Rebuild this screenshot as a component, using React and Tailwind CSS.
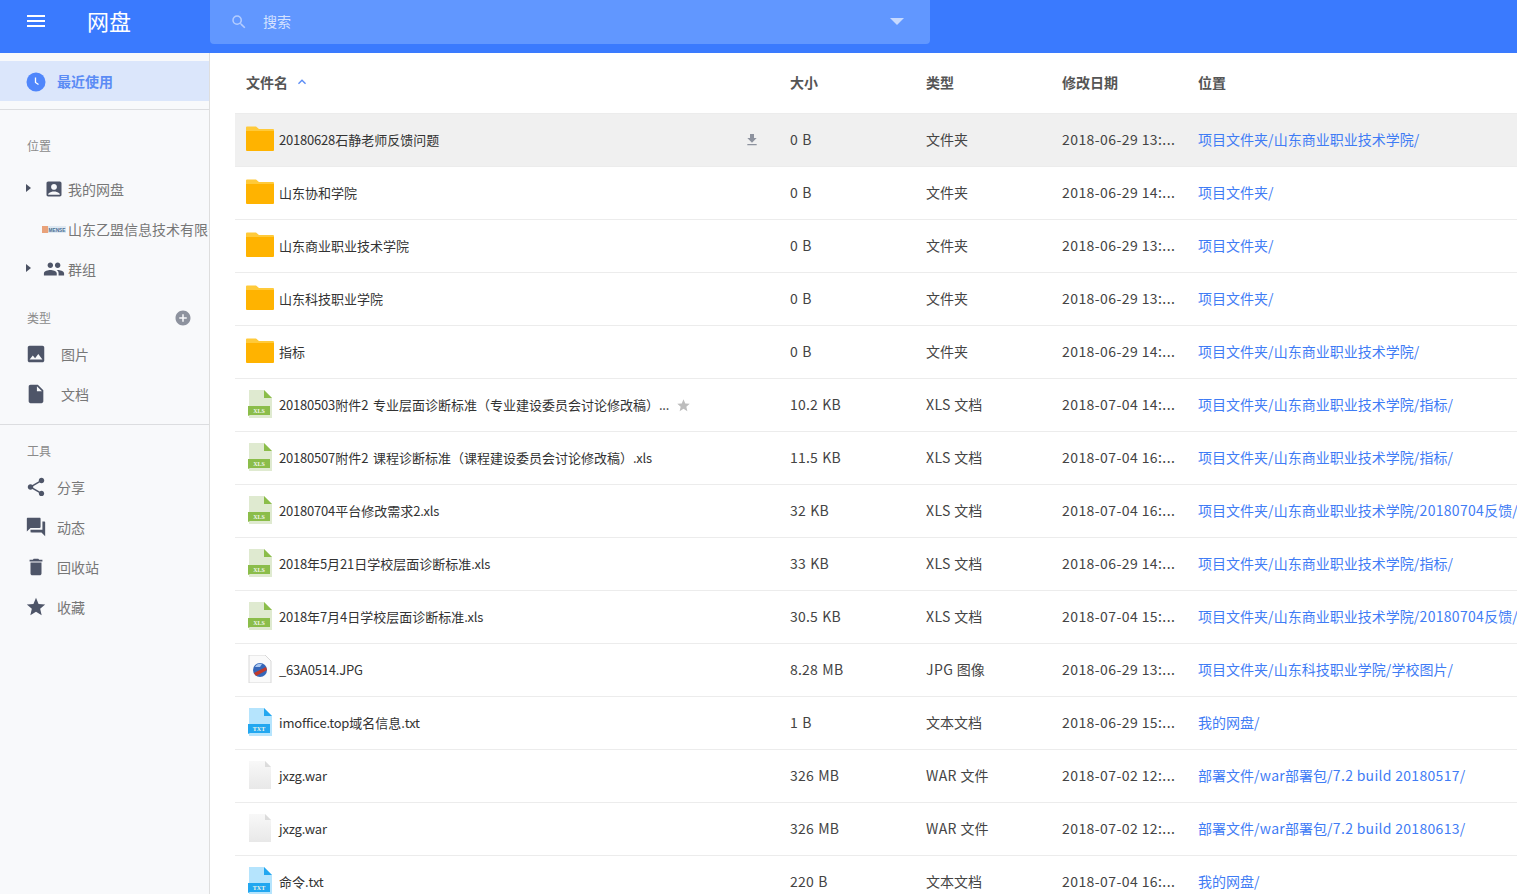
import {
  MdMenu, MdSearch, MdAccountBox, MdPeople, MdImage, MdInsertDriveFile, MdShare, MdForum,
  MdDelete, MdStar, MdAddCircle, MdFileDownload, MdKeyboardArrowUp,
} from "react-icons/md"

const font = { fontFamily: '"Noto Sans CJK SC", "Noto Sans", sans-serif' }

const P = "项目文件夹/"
const SD = "项目文件夹/山东商业职业技术学院/"

const files = [
  { icon: "folder", name: "20180628石静老师反馈问题", size: "0 B", type: "文件夹", date: "2018-06-29 13:...", path: SD, hover: true },
  { icon: "folder", name: "山东协和学院", size: "0 B", type: "文件夹", date: "2018-06-29 14:...", path: P },
  { icon: "folder", name: "山东商业职业技术学院", size: "0 B", type: "文件夹", date: "2018-06-29 13:...", path: P },
  { icon: "folder", name: "山东科技职业学院", size: "0 B", type: "文件夹", date: "2018-06-29 13:...", path: P },
  { icon: "folder", name: "指标", size: "0 B", type: "文件夹", date: "2018-06-29 14:...", path: SD },
  { icon: "xls", name: "20180503附件2 专业层面诊断标准（专业建设委员会讨论修改稿）...", size: "10.2 KB", type: "XLS 文档", date: "2018-07-04 14:...", path: SD + "指标/", star: true },
  { icon: "xls", name: "20180507附件2 课程诊断标准（课程建设委员会讨论修改稿）.xls", size: "11.5 KB", type: "XLS 文档", date: "2018-07-04 16:...", path: SD + "指标/" },
  { icon: "xls", name: "20180704平台修改需求2.xls", size: "32 KB", type: "XLS 文档", date: "2018-07-04 16:...", path: SD + "20180704反馈/" },
  { icon: "xls", name: "2018年5月21日学校层面诊断标准.xls", size: "33 KB", type: "XLS 文档", date: "2018-06-29 14:...", path: SD + "指标/" },
  { icon: "xls", name: "2018年7月4日学校层面诊断标准.xls", size: "30.5 KB", type: "XLS 文档", date: "2018-07-04 15:...", path: SD + "20180704反馈/" },
  { icon: "jpg", name: "_63A0514.JPG", size: "8.28 MB", type: "JPG 图像", date: "2018-06-29 13:...", path: "项目文件夹/山东科技职业学院/学校图片/" },
  { icon: "txt", name: "imoffice.top域名信息.txt", size: "1 B", type: "文本文档", date: "2018-06-29 15:...", path: "我的网盘/" },
  { icon: "blank", name: "jxzg.war", size: "326 MB", type: "WAR 文件", date: "2018-07-02 12:...", path: "部署文件/war部署包/7.2 build 20180517/" },
  { icon: "blank", name: "jxzg.war", size: "326 MB", type: "WAR 文件", date: "2018-07-02 12:...", path: "部署文件/war部署包/7.2 build 20180613/" },
  { icon: "txt", name: "命令.txt", size: "220 B", type: "文本文档", date: "2018-07-04 16:...", path: "我的网盘/" },
]

// latin runs come out a bit wider at 14px and narrower at 13px in the reference
function Latin({ text, className }) {
  return text.split(/([\x00-\x7f]+)/).map((part, i) =>
    i % 2 ? <span key={i} className={className}>{part}</span> : part
  )
}

function FileIcon({ kind }) {
  if (kind === "folder") {
    return (
      <svg width="28" height="28" viewBox="0 0 28 28">
        <path d="M0 2.500a1 1 0 0 1 1-1h9l3 2.500h14a1 1 0 0 1 1 1V7H0z" fill="#ffca3a" />
        <path d="M0 6h28v19a1 1 0 0 1-1 1H1a1 1 0 0 1-1-1z" fill="#ffb300" />
      </svg>
    )
  }
  if (kind === "xls" || kind === "txt") {
    const c = kind === "xls"
      ? { page: "#dfead0", mark: "#8bbd4a" }
      : { page: "#b5e4fd", mark: "#22a7f0" }
    return (
      <svg width="28" height="28" viewBox="0 0 28 28">
        <path d="M3 0h15l8 8v20H3z" fill={c.page} />
        <path d="M18 0l8 8h-8z" fill={c.mark} />
        <path d="M2 16h22v9H4l-2 1z" fill={c.mark} />
        <text x="13" y="23" textAnchor="middle" fontSize="6" fontWeight="700" fill="#f1f6ea" fontFamily="Liberation Serif, serif">{kind.toUpperCase()}</text>
      </svg>
    )
  }
  if (kind === "jpg") {
    return (
      <svg width="28" height="28" viewBox="0 0 28 28">
        <path d="M3 0h16l6 6v22H3z" fill="#fafafa" stroke="#d8d8d8" />
        <circle cx="14" cy="15" r="7" fill="#3566b8" />
        <path d="M8 18l12-6 1 3-11 6z" fill="#c0392b" />
        <path d="M9 12a6 6 0 0 1 7-3l-2 3z" fill="#a9c6ef" />
      </svg>
    )
  }
  return (
    <svg width="28" height="28" viewBox="0 0 28 28">
      <defs>
        <linearGradient id="blank" x1="0" y1="0" x2="0" y2="1">
          <stop offset="0" stopColor="#f8f8f8" />
          <stop offset="1" stopColor="#e8e8e8" />
        </linearGradient>
      </defs>
      <path d="M3 0h16l6 6v22H3z" fill="url(#blank)" />
      <path d="M19 0l6 6h-6z" fill="#dcdcdc" />
    </svg>
  )
}

function Caret() {
  return <span className="mb-[3px] w-0 h-0 border-y-[4px] border-y-transparent border-l-[5px] border-l-[#4b5263] shrink-0" />
}

function NavItem({ icon, label, gap = "ml-[10px]" }) {
  const Icon = icon
  return (
    <div className="h-10 flex items-center pl-[25px] text-sm text-[#777]">
      <Icon className="text-[#4e5568] shrink-0" size={22} />
      <span className={gap}>{label}</span>
    </div>
  )
}

function Sidebar() {
  return (
    <aside className="w-[210px] shrink-0 bg-[#f8f9fb] border-r border-[#dedede] overflow-hidden">
      <div className="mt-2 h-10 bg-[#dbe6fb] flex items-center pl-[26px]">
        <svg width="20" height="20" viewBox="0 0 20 20" className="shrink-0 mt-[2px]">
          <circle cx="10" cy="10" r="9.500" fill="#4f86fb" />
          <path d="M9.500 5.500V10.500l3 2" fill="none" stroke="#fff" strokeWidth="1.300" />
        </svg>
        <span className="ml-[11px] mb-[1px] text-sm font-bold text-[#5b8cf5]">最近使用</span>
      </div>
      <div className="mt-2 border-t border-[#dcdde0]" />

      <div className="pt-6 pb-[11px] pl-[27px] text-xs leading-6 text-[#8a8a8a]">位置</div>
      <div className="h-10 flex items-center pl-[26px] text-sm text-[#777]">
        <Caret />
        <MdAccountBox size={20} className="ml-[13px] text-[#4e5568] shrink-0" />
        <span className="ml-[4px]">我的网盘</span>
      </div>
      <div className="h-10 flex items-center pl-[42px] text-sm text-[#777] whitespace-nowrap">
        <svg width="24" height="7" viewBox="0 0 24 7" className="shrink-0">
          <rect width="24" height="7" fill="#dfe9f2" />
          <rect width="6" height="7" fill="#e9a27a" />
          <text x="6.500" y="5.800" fontSize="6" fontWeight="700" fill="#4a6f94" textLength="17" lengthAdjust="spacingAndGlyphs" fontFamily="Liberation Sans, sans-serif">MENSE</text>
        </svg>
        <span className="ml-[2px]">山东乙盟信息技术有限公司</span>
      </div>
      <div className="h-10 flex items-center pl-[26px] text-sm text-[#777]">
        <Caret />
        <MdPeople size={22} className="ml-[12px] text-[#4e5568] shrink-0" />
        <span className="ml-[3px]">群组</span>
      </div>

      <div className="mt-[17px] mb-[4px] h-6 flex items-center justify-between pl-[27px] pr-[17px] text-xs text-[#8a8a8a]">
        <span>类型</span>
        <MdAddCircle size={18} className="text-[#8d929e]" />
      </div>
      <NavItem icon={MdImage} label="图片" gap="ml-[14px]" />
      <NavItem icon={MdInsertDriveFile} label="文档" gap="ml-[14px]" />
      <div className="mt-[10px] border-t border-[#dcdde0]" />

      <div className="mt-[14px] mb-[4px] h-6 flex items-center pl-[27px] text-xs text-[#8a8a8a]">工具</div>
      <NavItem icon={MdShare} label="分享" />
      <NavItem icon={MdForum} label="动态" />
      <NavItem icon={MdDelete} label="回收站" />
      <NavItem icon={MdStar} label="收藏" />
    </aside>
  )
}

function Row({ file }) {
  return (
    <div className={`grid grid-cols-[555px_136px_136px_136px_1fr] h-[53px] items-center border-b border-[#ececec] text-sm text-[#444] whitespace-nowrap ${file.hover ? "bg-[#f0f0f0]" : ""}`}>
      <div className="flex items-center pl-[11px] min-w-0">
        <span className="shrink-0 flex mb-[2px]"><FileIcon kind={file.icon} /></span>
        <span className="ml-[5px] text-[13px] text-[#333] [word-spacing:2px]"><Latin text={file.name} className="tracking-[-0.2px]" /></span>
        {file.star && <MdStar size={15} className="ml-[7px] text-[#bdbdbd] shrink-0" />}
        {file.hover && <MdFileDownload size={16} className="ml-auto mr-[30px] text-[#8d929e] shrink-0" />}
      </div>
      <div className="mb-[2px] [word-spacing:1px]"><Latin text={file.size} className="tracking-[0.2px]" /></div>
      <div className="mb-[2px]"><Latin text={file.type} className="tracking-[0.4px]" /></div>
      <div className="mb-[2px] tracking-[0.42px]">{file.date}</div>
      <div className="mb-[2px] text-[#3f7cf5]"><Latin text={file.path} className="tracking-[0.3px]" /></div>
    </div>
  )
}

export default function App() {
  return (
    <div className="h-[894px] flex flex-col overflow-hidden bg-white" style={font}>
      <header className="h-[53px] shrink-0 bg-[#3a7afe] flex items-start">
        <div className="w-[210px] h-[41px] flex items-center shrink-0">
          <MdMenu size={24} className="ml-[24px] text-white" />
          <span className="ml-[39px] text-[22px] text-white">网盘</span>
        </div>
        <div className="w-[720px] h-[44px] bg-[#6197ff] rounded-b flex items-center pl-[20px] pr-[26px] text-sm text-[#d4e2ff]">
          <MdSearch size={18} className="mb-[1px] text-[#b4cdff]" />
          <span className="ml-[15px] mb-[2px]">搜索</span>
          <span className="ml-auto mb-[1px] w-0 h-0 border-x-[7px] border-x-transparent border-t-[7px] border-t-[#c6d9ff]" />
        </div>
      </header>
      <div className="flex flex-1 min-h-0">
        <Sidebar />
        <main className="flex-1 min-w-0 overflow-hidden pl-[25px]">
          <div className="w-[1400px]">
            <div className="grid grid-cols-[555px_136px_136px_136px_1fr] h-[61px] pb-[3px] items-center border-b border-[#ececec] text-sm font-bold text-[#555]">
              <div className="pl-[11px] flex items-center">
                文件名
                <MdKeyboardArrowUp size={16} className="ml-[6px] text-[#5b8cf5]" />
              </div>
              <div>大小</div>
              <div>类型</div>
              <div>修改日期</div>
              <div>位置</div>
            </div>
            {files.map((file, i) => <Row key={i} file={file} />)}
          </div>
        </main>
      </div>
    </div>
  )
}
